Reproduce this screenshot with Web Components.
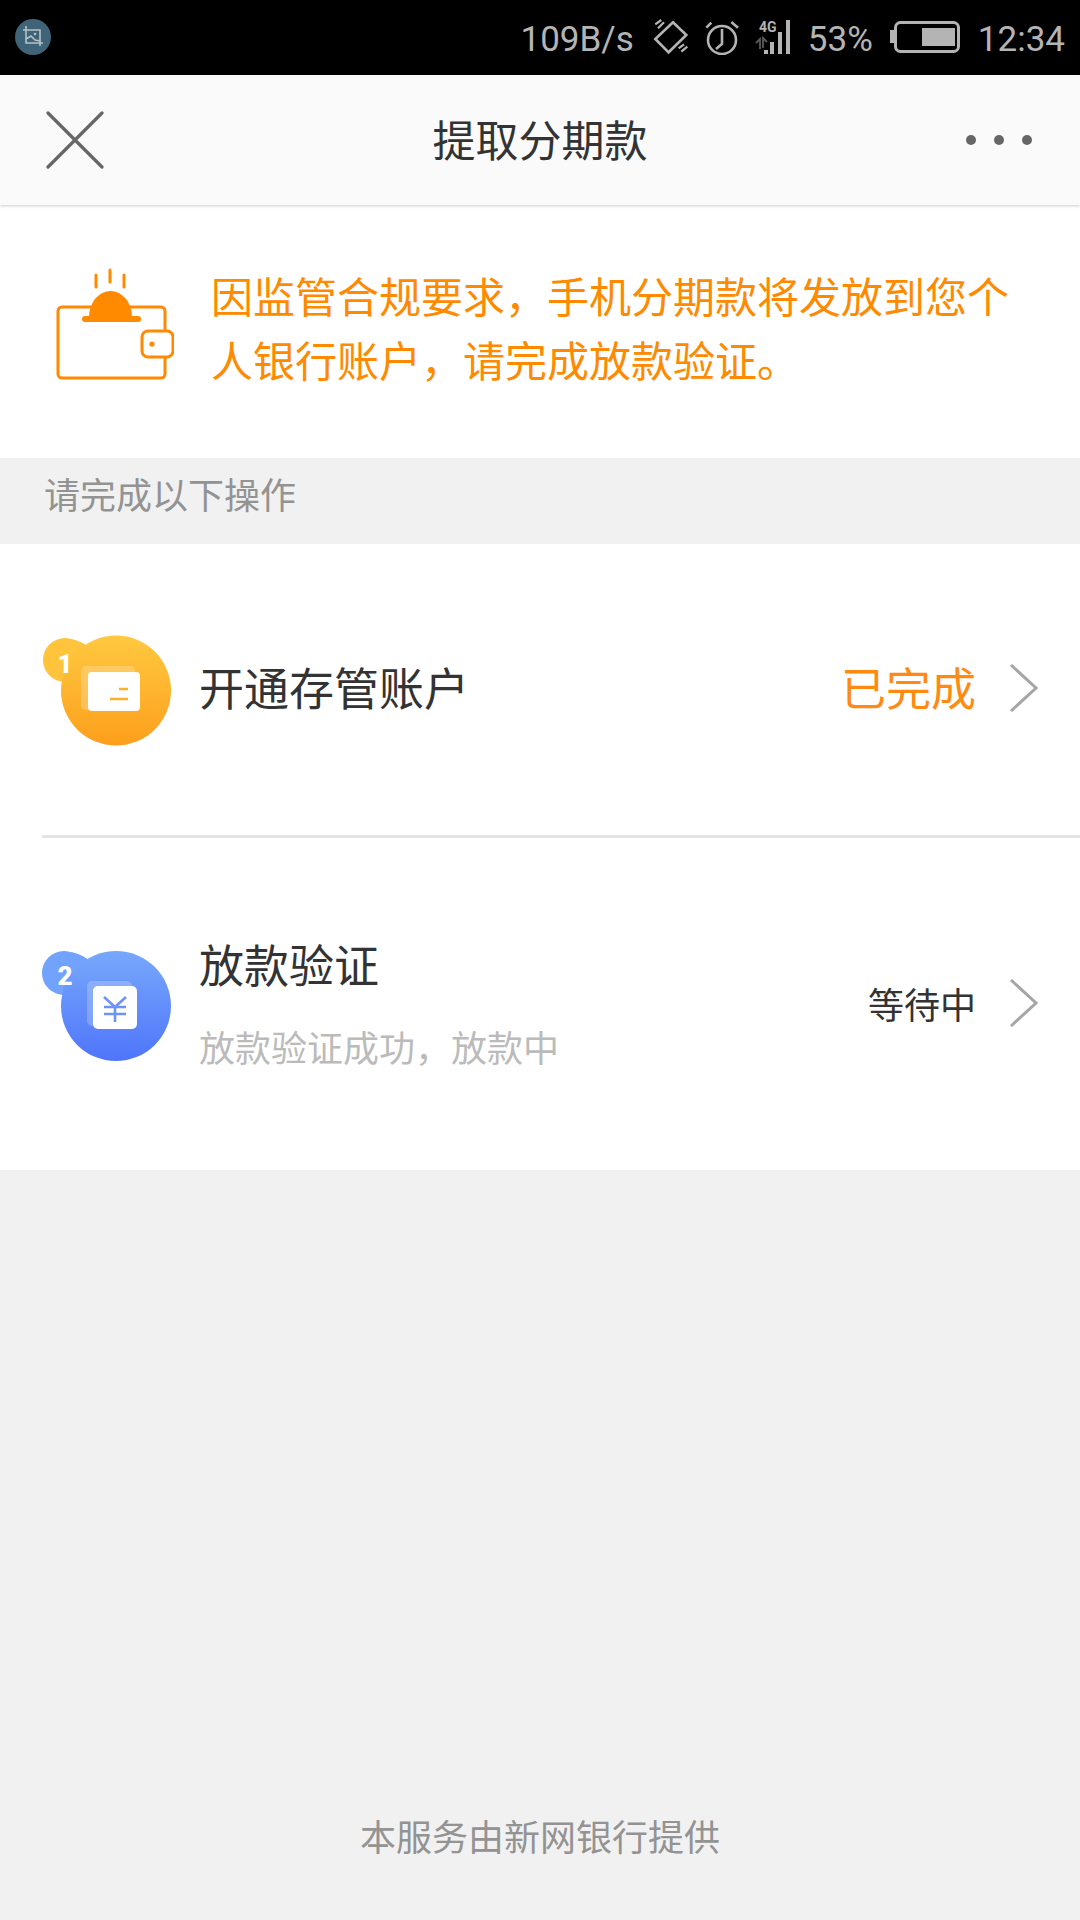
<!DOCTYPE html>
<html lang="zh">
<head>
<meta charset="utf-8">
<style>
  html, body { margin: 0; padding: 0; }
  body {
    width: 1080px;
    height: 1920px;
    background: #f1f1f1;
    font-family: Roboto, "Noto Sans CJK SC", sans-serif;
    display: flex;
    flex-direction: column;
  }
</style>
</head>
<body>
<status-bar></status-bar>
<nav-bar>提取分期款</nav-bar>
<notice-banner>因监管合规要求，手机分期款将发放到您个人银行账户，请完成放款验证。</notice-banner>
<section-label>请完成以下操作</section-label>
<step-list>
  <step-row step="1" status="已完成" done>开通存管账户</step-row>
  <step-row step="2" status="等待中" note="放款验证成功，放款中">放款验证</step-row>
</step-list>
<page-footer>本服务由新网银行提供</page-footer>

<script>
class StatusBar extends HTMLElement {
  constructor() {
    super();
    this.attachShadow({ mode: "open" });
  }

  connectedCallback() {
    this.shadowRoot.innerHTML = `
    <style>
      :host {
        display: flex;
        align-items: center;
        height: 75px;
        flex: none;
        background: #000;
        color: #b4b4b4;
        font: 35px Roboto, sans-serif;
        padding: 0 15px 0 15px;
        box-sizing: border-box;
      }
      .shot { margin-right: auto; }
      svg { display: block; flex: none; margin-bottom: 2px; }
      span { white-space: nowrap; line-height: 75px; padding-top: 4px; }
      .speed { margin-right: 19px; }
      .rotate { margin-right: 14px; }
      .alarm { margin-right: 13px; }
      .signal { margin-right: 16px; }
      .pct { margin-right: 17px; }
      .battery { margin-right: 18px; }
    </style>
    <svg class="shot" width="36" height="36" viewBox="0 0 36 36">
      <circle cx="18" cy="18" r="18" fill="#3f6377"/>
      <g fill="none" stroke="#b6c2c8" stroke-width="1.6">
        <path d="M11 11h14v13H11z"/>
        <path d="M11 7v4M25 24v3M8 11h3M25 24h3"/>
        <path d="M11 20l5-3 4 4 5 1"/>
      </g>
      <circle cx="20" cy="15" r="1.3" fill="#b6c2c8"/>
    </svg>
    <span class="speed">109B/s</span>
    <svg class="rotate" width="36" height="38" viewBox="0 0 36 38" fill="none" stroke="#b4b4b4" stroke-width="2.6">
      <path d="M20 4.300L33.300 17 15.600 34.300 2.300 21z"/>
      <path d="M2.300 6.300l6-4.300M5 10.300l6-6M25.600 30.300l5.400-4M28.300 33.600l6-5" stroke-width="2.200"/>
    </svg>
    <svg class="alarm" width="38" height="36" viewBox="0 0 38 36" fill="none" stroke="#b4b4b4" stroke-width="2.6">
      <circle cx="19" cy="21" r="14"/>
      <path d="M19 10v15l-6 5M3.300 8.700l5-5M35 8.700L28.300 3"/>
    </svg>
    <svg class="signal" width="38" height="38" viewBox="0 0 38 38">
      <text x="5" y="14" font-family="Roboto, sans-serif" font-size="14" font-weight="700" fill="#b4b4b4">4G</text>
      <path d="M10 32h4v4h-4zM16 24h4v12h-4zM24 14h4v22h-4zM32 2h4v34h-4z" fill="#b4b4b4"/>
      <path d="M2 25l4-4v10M9 30v-10l4 4" fill="none" stroke="#5a5a5a" stroke-width="1.800"/>
    </svg>
    <span class="pct">53%</span>
    <svg class="battery" width="70" height="32" viewBox="0 0 70 32">
      <rect x="0" y="9" width="4" height="13" fill="#b4b4b4"/>
      <rect x="5.500" y="1.500" width="63" height="29" rx="5" fill="none" stroke="#b4b4b4" stroke-width="3"/>
      <rect x="32" y="7" width="33" height="18" fill="#b4b4b4"/>
    </svg>
    <span>12:34</span>`;
  }
}

class NavBar extends HTMLElement {
  constructor() {
    super();
    this.attachShadow({ mode: "open" });
  }

  connectedCallback() {
    this.shadowRoot.innerHTML = `
    <style>
      :host {
        display: grid;
        grid-template-columns: 1fr auto 1fr;
        align-items: center;
        flex: none;
        height: 130px;
        box-sizing: border-box;
        padding: 0 48px 0 46px;
        background: #fafafa;
        box-shadow: 0 1px 3px rgba(0, 0, 0, .2);
        position: relative;
        color: #333;
      }
      .title {
        font: 43px/1 "Noto Sans CJK SC", sans-serif;
        margin: 0 0 3px 2px;
      }
      .close { display: block; }
      .more { display: flex; gap: 18px; justify-content: flex-end; }
      .more i { width: 10px; height: 10px; border-radius: 50%; background: #666; display: block; }
    </style>
    <svg class="close" width="58" height="58" viewBox="0 0 58 58" stroke="#666" stroke-width="3.2" stroke-linecap="round">
      <path d="M2 2l54 54M56 2L2 56"/>
    </svg>
    <div class="title"><slot></slot></div>
    <div class="more"><i></i><i></i><i></i></div>`;
  }
}

class NoticeBanner extends HTMLElement {
  constructor() {
    super();
    this.attachShadow({ mode: "open" });
  }

  connectedCallback() {
    this.shadowRoot.innerHTML = `
    <style>
      :host {
        display: flex;
        flex: none;
        align-items: center;
        height: 253px;
        box-sizing: border-box;
        padding: 0 64px 10px 56px;
        gap: 37px;
        background: #fff;
        color: #ff8a00;
      }
      svg { flex: none; display: block; margin-bottom: 5px; }
      .text {
        font: 42px/64px "Noto Sans CJK SC", sans-serif;
        width: 800px;
      }
    </style>
    <svg width="118" height="112" viewBox="56 268 118 112" fill="none" stroke="#ff8a00" stroke-width="3">
      <path d="M96 275v12M110 270v12M124 275v12" stroke-linecap="round"/>
      <path d="M88 307H161a4 4 0 0 1 4 4v20M165 357v17a4 4 0 0 1-4 4H62a4 4 0 0 1-4-4V311a4 4 0 0 1 4-4H132"/>
      <rect x="142" y="331" width="31" height="26" rx="6" fill="#fff"/>
      <circle cx="152" cy="344" r="2.600" fill="#ff8a00" stroke="none"/>
      <path d="M89 317a21.500 26 0 0 1 43 0z" fill="#ff8a00" stroke="none"/>
      <rect x="82" y="316" width="59" height="6" rx="3" fill="#ff8a00" stroke="none"/>
    </svg>
    <div class="text"><slot></slot></div>`;
  }
}

class SectionLabel extends HTMLElement {
  constructor() {
    super();
    this.attachShadow({ mode: "open" });
  }

  connectedCallback() {
    this.shadowRoot.innerHTML = `
    <style>
      :host {
        display: flex;
        flex: none;
        align-items: center;
        height: 86px;
        box-sizing: border-box;
        padding: 0 0 16px 44px;
        background: #f1f1f1;
        color: #939393;
        font: 36px/1 "Noto Sans CJK SC", sans-serif;
      }
    </style>
    <slot></slot>`;
  }
}

class StepList extends HTMLElement {
  constructor() {
    super();
    this.attachShadow({ mode: "open" });
  }

  connectedCallback() {
    this.shadowRoot.innerHTML = `
    <style>
      :host {
        display: flex;
        flex-direction: column;
        flex: none;
        background: #fff;
      }
    </style>
    <slot></slot>`;
  }
}

class StepRow extends HTMLElement {
  constructor() {
    super();
    this.attachShadow({ mode: "open" });
  }

  icon(step) {
    if (step === "1") {
      return `
      <svg width="134" height="116" viewBox="39 632 134 116">
        <defs><linearGradient id="g1" x1="0" y1="0" x2="0" y2="1"><stop offset="0" stop-color="#ffc940"/><stop offset="1" stop-color="#fd9f1c"/></linearGradient></defs>
        <circle cx="64" cy="660" r="22" fill="#ffc43c"/>
        <path d="M70 639q10 2 18 8L62 682q-6-4-12-6z" fill="#ffc43c"/>
        <circle cx="115" cy="690.500" r="55" fill="url(#g1)"/>
        <rect x="80" y="666" width="54" height="44" rx="5" fill="#fff" fill-opacity=".22"/>
        <rect x="87" y="672" width="52" height="39" rx="4" fill="#fff"/>
        <path d="M118 689h9M109 699h18" stroke="#fdb02b" stroke-width="2.400"/>
        <text x="64" y="673" text-anchor="middle" font-family="Roboto, sans-serif" font-size="26" font-weight="900" fill="#fff">1</text>
      </svg>`;
    }
    return `
    <svg width="134" height="116" viewBox="39 946 134 116">
      <defs><linearGradient id="g2" x1="0" y1="0" x2="0" y2="1"><stop offset="0" stop-color="#77a8fb"/><stop offset="1" stop-color="#4f75fb"/></linearGradient></defs>
      <circle cx="63" cy="973" r="22" fill="#71a2fc"/>
      <path d="M70 952q10 2 18 8L62 995q-6-4-12-6z" fill="#71a2fc"/>
      <circle cx="115" cy="1006" r="55" fill="url(#g2)"/>
      <rect x="86" y="981" width="45" height="45" rx="5" fill="#fff" fill-opacity=".22"/>
      <rect x="92" y="986" width="44" height="43" rx="5" fill="#fff"/>
      <path d="M103 997l11 10 11-10M103 1007h22M103 1014h22M114 1007v15" fill="none" stroke="#6e93f8" stroke-width="2.600"/>
      <text x="64" y="985" text-anchor="middle" font-family="Roboto, sans-serif" font-size="26" font-weight="900" fill="#fff">${step}</text>
    </svg>`;
  }

  connectedCallback() {
    const step = this.getAttribute("step");
    const done = this.hasAttribute("done");
    const note = this.getAttribute("note");
    this.shadowRoot.innerHTML = `
    <style>
      :host {
        display: block;
        font-family: "Noto Sans CJK SC", sans-serif;
        padding-left: 42px;
      }
      :host([done]) .row { height: 291px; border-bottom: 3px solid #e4e4e4; }
      .row {
        display: flex;
        align-items: center;
        height: 332px;
        padding-right: 42px;
      }
      .icon { flex: none; width: 157px; margin-left: -2px; }
      .icon svg { display: block; }
      .main { flex: 1; min-width: 0; padding-left: 2px; }
      .name { font-size: 45px; line-height: 60px; color: #333; margin-bottom: 6px; }
      .note { font-size: 36px; line-height: 50px; color: #bbb; margin: 27px 0 4px; }
      .status { font-size: 36px; color: #333; margin-right: 34px; margin-bottom: 2px; }
      .status.done { font-size: 45px; color: #ff8a0f; margin-bottom: 6px; }
      .arrow { flex: none; display: block; margin-bottom: 3px; }
    </style>
    <div class="row">
      <div class="icon">${this.icon(step)}</div>
      <div class="main">
        <div class="name"><slot></slot></div>
        ${note ? `<div class="note">${note}</div>` : ""}
      </div>
      <div class="status ${done ? "done" : ""}">${this.getAttribute("status")}</div>
      <svg class="arrow" width="28" height="48" viewBox="0 0 28 48" fill="none" stroke="#a6a6a6" stroke-width="3">
        <path d="M1 1l25 23L1 47"/>
      </svg>
    </div>`;
  }
}

class PageFooter extends HTMLElement {
  constructor() {
    super();
    this.attachShadow({ mode: "open" });
  }

  connectedCallback() {
    this.shadowRoot.innerHTML = `
    <style>
      :host {
        display: flex;
        flex: 1;
        align-items: flex-end;
        justify-content: center;
        padding-bottom: 67px;
        color: #939393;
        font: 36px/1 "Noto Sans CJK SC", sans-serif;
      }
    </style>
    <slot></slot>`;
  }
}

customElements.define("status-bar", StatusBar);
customElements.define("nav-bar", NavBar);
customElements.define("notice-banner", NoticeBanner);
customElements.define("section-label", SectionLabel);
customElements.define("step-list", StepList);
customElements.define("step-row", StepRow);
customElements.define("page-footer", PageFooter);
</script>
</body>
</html>
